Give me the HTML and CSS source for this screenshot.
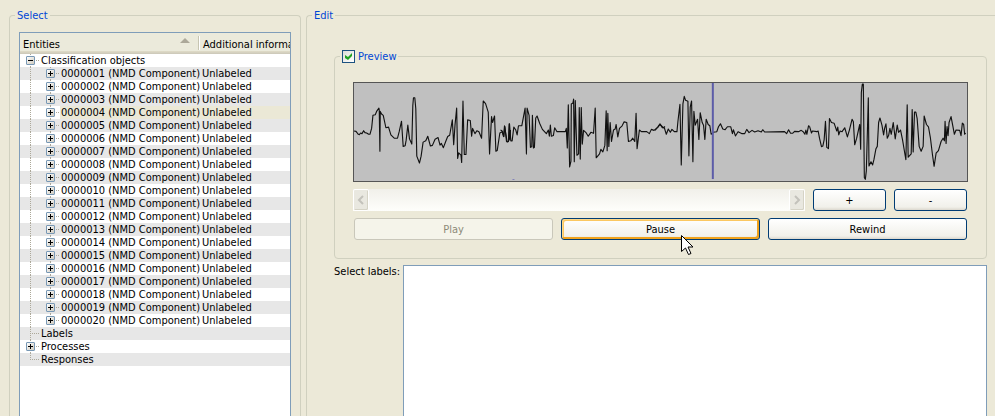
FILE: index.html
```html
<!DOCTYPE html>
<html lang="en">
<head>
<meta charset="utf-8">
<title>Entity editor</title>
<link rel="stylesheet" href="styles.css">
</head>
<body>
<main class="page">
<fieldset class="group group-select">
<legend>Select</legend>
<div class="tree-frame">
<table class="tree">
<colgroup><col class="col-entity"><col></colgroup>
<thead><tr><th scope="col"><span class="head">Entities<span class="sort"></span></span></th><th scope="col" class="second">Additional information</th></tr></thead>
<tbody>
<tr><td><div class="node"><i class="g first"><button class="box" aria-label="Collapse"></button></i><span>Classification objects</span></div></td><td></td></tr>
<tr><td><div class="node"><i class="g line"></i><i class="g"><button class="box plus" aria-label="Expand"></button></i><span>0000001 (NMD Component)</span></div></td><td>Unlabeled</td></tr>
<tr><td><div class="node"><i class="g line"></i><i class="g"><button class="box plus" aria-label="Expand"></button></i><span>0000002 (NMD Component)</span></div></td><td>Unlabeled</td></tr>
<tr><td><div class="node"><i class="g line"></i><i class="g"><button class="box plus" aria-label="Expand"></button></i><span>0000003 (NMD Component)</span></div></td><td>Unlabeled</td></tr>
<tr class="current"><td><div class="node"><i class="g line"></i><i class="g"><button class="box plus" aria-label="Expand"></button></i><span>0000004 (NMD Component)</span></div></td><td>Unlabeled</td></tr>
<tr><td><div class="node"><i class="g line"></i><i class="g"><button class="box plus" aria-label="Expand"></button></i><span>0000005 (NMD Component)</span></div></td><td>Unlabeled</td></tr>
<tr><td><div class="node"><i class="g line"></i><i class="g"><button class="box plus" aria-label="Expand"></button></i><span>0000006 (NMD Component)</span></div></td><td>Unlabeled</td></tr>
<tr><td><div class="node"><i class="g line"></i><i class="g"><button class="box plus" aria-label="Expand"></button></i><span>0000007 (NMD Component)</span></div></td><td>Unlabeled</td></tr>
<tr><td><div class="node"><i class="g line"></i><i class="g"><button class="box plus" aria-label="Expand"></button></i><span>0000008 (NMD Component)</span></div></td><td>Unlabeled</td></tr>
<tr><td><div class="node"><i class="g line"></i><i class="g"><button class="box plus" aria-label="Expand"></button></i><span>0000009 (NMD Component)</span></div></td><td>Unlabeled</td></tr>
<tr><td><div class="node"><i class="g line"></i><i class="g"><button class="box plus" aria-label="Expand"></button></i><span>0000010 (NMD Component)</span></div></td><td>Unlabeled</td></tr>
<tr><td><div class="node"><i class="g line"></i><i class="g"><button class="box plus" aria-label="Expand"></button></i><span>0000011 (NMD Component)</span></div></td><td>Unlabeled</td></tr>
<tr><td><div class="node"><i class="g line"></i><i class="g"><button class="box plus" aria-label="Expand"></button></i><span>0000012 (NMD Component)</span></div></td><td>Unlabeled</td></tr>
<tr><td><div class="node"><i class="g line"></i><i class="g"><button class="box plus" aria-label="Expand"></button></i><span>0000013 (NMD Component)</span></div></td><td>Unlabeled</td></tr>
<tr><td><div class="node"><i class="g line"></i><i class="g"><button class="box plus" aria-label="Expand"></button></i><span>0000014 (NMD Component)</span></div></td><td>Unlabeled</td></tr>
<tr><td><div class="node"><i class="g line"></i><i class="g"><button class="box plus" aria-label="Expand"></button></i><span>0000015 (NMD Component)</span></div></td><td>Unlabeled</td></tr>
<tr><td><div class="node"><i class="g line"></i><i class="g"><button class="box plus" aria-label="Expand"></button></i><span>0000016 (NMD Component)</span></div></td><td>Unlabeled</td></tr>
<tr><td><div class="node"><i class="g line"></i><i class="g"><button class="box plus" aria-label="Expand"></button></i><span>0000017 (NMD Component)</span></div></td><td>Unlabeled</td></tr>
<tr><td><div class="node"><i class="g line"></i><i class="g"><button class="box plus" aria-label="Expand"></button></i><span>0000018 (NMD Component)</span></div></td><td>Unlabeled</td></tr>
<tr><td><div class="node"><i class="g line"></i><i class="g"><button class="box plus" aria-label="Expand"></button></i><span>0000019 (NMD Component)</span></div></td><td>Unlabeled</td></tr>
<tr><td><div class="node"><i class="g line"></i><i class="g last"><button class="box plus" aria-label="Expand"></button></i><span>0000020 (NMD Component)</span></div></td><td>Unlabeled</td></tr>
<tr><td><div class="node"><i class="g"></i><span>Labels</span></div></td><td></td></tr>
<tr><td><div class="node"><i class="g"><button class="box plus" aria-label="Expand"></button></i><span>Processes</span></div></td><td></td></tr>
<tr><td><div class="node"><i class="g last"></i><span>Responses</span></div></td><td></td></tr>
</tbody>
</table>
</div>
</fieldset>
<fieldset class="group group-edit">
<legend>Edit</legend>
<fieldset class="preview">
<legend><label class="check"><input type="checkbox" checked>Preview</label></legend>
<svg class="wave" viewBox="0 0 1845 300" preserveAspectRatio="none" role="img" aria-label="Waveform">
<g fill="none" stroke="#111" stroke-width="3.4" stroke-linejoin="round">
<polyline transform="translate(-24 -21)" points="24,168 30,169 33,173 37,178 40,179 44,174 48,176 53,167 57,173 62,174 68,178 72,178 77,160 81,120 88,118 92,108 99,98 100,104 102,230 103,108 107,116 112,120 120,158 128,156 135,180 145,190 155,190 160,170 167,138 172,215 178,213 181,196 186,150 191,192 198,208 201,90 203,66 207,66 210,100 213,245 221,266 226,245 232,202 240,198 246,184 254,214 260,212 268,193 277,188 283,211 287,206 293,219 300,200 306,185 312,181 320,134 324,210 328,150 333,98 336,252 339,235 346,242 348,264 352,76 356,240 361,240 366,134 374,136 378,184 381,160 388,176 394,167 400,170 408,190 413,76 420,84 428,110 432,238 438,124 441,142 447,122 451,230 455,228 463,174 470,170 474,185 477,152 485,202 489,200 491,146 493,195 495,165"/>
<polyline transform="translate(441 -21)" points="0,165 5,168 10,185 13,154 18,200 24,200 27,146 31,198 35,198 40,156 46,165 50,180 54,152 64,152 74,98 78,238 80,98 86,120 90,218 94,216 96,120 99,220 102,218 106,128 110,122 118,145 126,163 138,176 144,165 147,184 150,150 153,184 159,182 163,158 170,170 195,170 198,160 201,220 204,88 208,278 212,260 213,85 218,82 220,70 222,262 225,75 230,242 235,238 237,96 240,254 243,96 246,208 250,166 258,174 264,184 272,172 280,175 285,98 288,250 298,238 302,224 308,232 314,212 318,106 321,228 323,114 326,215 330,142 334,200 340,165 345,162 348,148 353,186 358,160 366,152 372,140 380,142 385,200 392,198 398,190 404,200 408,114 411,222 418,165 424,170 440,170 448,176 454,163 462,166 474,156 480,148 490,158 495,154"/>
<polyline transform="translate(906 -21)" points="0,166 8,156 15,146 22,158 28,158 34,178 40,162 46,172 51,163 58,170 66,170 69,138 75,86 79,272 84,85 88,62 92,74 99,77 102,244 106,95 110,76 114,262 117,108 121,150 128,132 132,194 136,112 142,142 146,150 150,194 154,132 160,148 165,152 169,178 175,172 186,170 191,155 197,146 204,162 211,164 218,155 228,155 233,176 236,164 242,183 250,170 262,176 270,176 276,163 283,173 292,166 300,171 310,167 320,171 324,164 330,171 390,170 396,176 402,164 408,175 414,175 420,169 432,170 440,166 446,170 451,178 454,165 457,178 462,152 465,154"/>
<polyline transform="translate(1371 -21)" points="0,154 6,174 9,168 22,170 26,168 30,190 36,216 40,214 44,195 48,138 52,218 57,222 60,130 66,142 74,144 82,168 85,156 88,180 92,168 98,170 106,158 114,186 120,165 128,132 132,140 136,210 142,190 151,148 154,224 156,50 159,24 162,24 165,310 168,316 171,290 177,66 179,275 185,262 190,272 194,255 200,222 204,215 208,142 212,128 218,150 223,180 226,160 230,146 234,190 238,182 242,160 246,178 252,142 258,192 264,150 268,172 274,165 280,195 290,256 294,88 297,248 306,238 309,102 312,232 316,110 320,110 324,130 330,215 336,230 342,215 345,122 352,148 358,155 364,190 370,240 375,276 381,236 388,228 396,200 402,190 406,198 408,138 411,206 414,154 417,182 420,142 426,124 432,156 436,178 441,165 452,166 456,182 460,144 464,148 467,178 470,174"/>
</g>
<path d="M1077 0h6v294h-6z" fill="#5c5ca8"/>
<path d="M477 294h6v3h-6z" fill="#8080b8"/>
</svg>
<div class="row">
<div class="scroll">
<button class="arrow" disabled aria-label="Scroll left"><svg viewBox="0 0 8 10"><path d="M6 1L2 5l4 4"/></svg></button>
<button class="arrow" disabled aria-label="Scroll right"><svg viewBox="0 0 8 10"><path d="M2 1l4 4-4 4"/></svg></button>
</div>
<button class="btn small">+</button>
<button class="btn small">-</button>
</div>
<div class="row actions">
<button class="btn" disabled>Play</button>
<button class="btn hot">Pause<svg class="pointer" viewBox="0 0 12 21" aria-hidden="true"><path d="M.5.5v16l4-3.500 3 6.500 2.500-1-3-6.500h5z" fill="#fff" stroke="#000"/></svg></button>
<button class="btn">Rewind</button>
</div>
</fieldset>
<div class="labels">
<label for="labels">Select labels:</label>
<select id="labels" multiple></select>
</div>
</fieldset>
</main>
</body>
</html>
```
FILE: styles.css
```css
* { box-sizing: border-box; }

body {
  margin: 0;
  background: #ece9d8;
  color: #000;
  font: 11px/13px "DejaVu Sans Condensed", Tahoma, sans-serif;
}

button, input, select { font: inherit; color: inherit; }

.page {
  display: flex;
  gap: 5px;
  height: 100vh;
  padding: 9px 0 0 9px;
  overflow: hidden;
}

.group {
  display: flex;
  flex-direction: column;
  min-width: 0;
  margin: 0;
  border: 1px solid #d0d0bf;
  border-bottom: 0;
  border-radius: 4px 4px 0 0;
}

legend { padding: 0 2px; color: #0046d5; }

.group-select { flex: 0 0 292px; padding: 10px 9px 0; }
.group-select > legend { margin-left: -4px; }
.group-edit { flex: 1; padding: 28px 8px 0 27px; border-right: 0; border-top-right-radius: 0; }
.group-edit > legend { margin-left: -22px; }

/* Entity tree */
.tree-frame {
  flex: 1;
  min-height: 0;
  overflow: hidden;
  background: #fff;
  border: 1px solid #7f9db9;
  border-bottom: 0;
}
.tree { width: 100%; table-layout: fixed; border-collapse: collapse; }
.col-entity { width: 178px; }
.tree th {
  height: 21px;
  padding: 2px 0 0 3px;
  background: linear-gradient(#ebeadb 0 18px, #e0dcc8 18px, #cbc7b8);
  font-weight: normal;
  text-align: left;
  white-space: nowrap;
  overflow: hidden;
}
.tree th.second {
  padding-left: 5px;
  background:
    linear-gradient(#c7c5b2, #c7c5b2) 0 3px / 1px 14px no-repeat,
    linear-gradient(#fff, #fff) 1px 3px / 1px 14px no-repeat,
    linear-gradient(#ebeadb 0 18px, #e0dcc8 18px, #cbc7b8);
}
.head { display: flex; justify-content: space-between; padding-right: 8px; }
.sort {
  width: 10px;
  height: 5px;
  background: #aca899;
  clip-path: polygon(50% 0, 100% 100%, 0 100%);
}
.tree td { height: 13px; padding: 0; line-height: 13px; white-space: nowrap; }
.tree td + td { padding-left: 4px; }
.tree tbody tr:nth-child(even) { background: #e7e7e7; }
.tree .current td:first-child { background: #fff; }
.tree .current td + td, .tree .current .node > span { background: #ebe8d6; }
.node { display: flex; height: 13px; }
.node > span { flex: 1; padding-left: 1px; }

/* Connector lines */
.g {
  --dots: repeating-linear-gradient(#aca899 0 1px, transparent 1px 2px);
  display: flex;
  flex: 0 0 20px;
  align-items: center;
  padding-left: 6px;
  background:
    var(--dots) 10px 0 / 1px 100% no-repeat,
    repeating-linear-gradient(90deg, #aca899 0 1px, transparent 1px 2px) 10px 6px / 9px 1px no-repeat;
}
.g.line { background: var(--dots) 10px 0 / 1px 100% no-repeat; }
.g.last {
  background:
    var(--dots) 10px 0 / 1px 7px no-repeat,
    repeating-linear-gradient(90deg, #aca899 0 1px, transparent 1px 2px) 10px 6px / 9px 1px no-repeat;
}
.box {
  width: 9px;
  height: 9px;
  padding: 0;
  border: 1px solid #7898b5;
  border-radius: 1px;
  background:
    linear-gradient(#000, #000) 1px 3px / 5px 1px no-repeat,
    linear-gradient(135deg, #fff, #cfcabd);
}
.box.plus {
  background:
    linear-gradient(#000, #000) 1px 3px / 5px 1px no-repeat,
    linear-gradient(#000, #000) 3px 1px / 1px 5px no-repeat,
    linear-gradient(135deg, #fff, #cfcabd);
}

/* Preview */
.preview {
  display: flex;
  flex-direction: column;
  gap: 7px;
  min-width: 0;
  margin: 0;
  padding: 19px 18px 18px;
  border: 1px solid #d0d0bf;
  border-radius: 4px;
}
.preview > legend { margin-left: -13px; }
.check { display: flex; align-items: center; gap: 3px; }
.check input {
  appearance: none;
  width: 13px;
  height: 13px;
  margin: 0;
  border: 1px solid #1c5180;
  background: linear-gradient(135deg, #dcdcd7, #fff);
  position: relative;
}
.check input:checked::after {
  content: "";
  position: absolute;
  inset: 2px;
  background: #21a121;
  clip-path: polygon(0 28%, 43% 57%, 100% 0, 100% 43%, 43% 100%, 0 71%);
}
.wave {
  display: block;
  width: 100%;
  height: 100px;
  border: 1px solid #555;
  background: #c0c0c0;
}
.row { display: flex; gap: 8px; padding-right: 1px; }
.actions { padding-left: 1px; }
.scroll {
  display: flex;
  flex: 1;
  justify-content: space-between;
  height: 22px;
  background: linear-gradient(#f1f0ea, #fefefb);
}
.arrow {
  width: 16px;
  padding: 0;
  border: 1px solid #fff;
  border-radius: 2px;
  background: #e9e8e0;
  box-shadow: inset -1px -1px #d5d3c6;
}
.arrow svg { display: block; width: 8px; height: 10px; margin: 0 auto; fill: none; stroke: #c3c2bb; stroke-width: 2; }
.btn {
  position: relative;
  flex: 1;
  height: 22px;
  padding: 0;
  border: 1px solid #003c74;
  border-radius: 3px;
  background: linear-gradient(#fff, #f1f0ea 85%, #dcd8ce);
}
.btn.small { flex: 0 0 73px; }
.btn:disabled { border-color: #c9c7ba; background: #f5f4ea; color: #8d8a78; }
.btn.hot { box-shadow: inset 1px 1px #fdd889, inset -2px -2px #f0a21c, inset 2px 2px #fbc761; }
.pointer { position: absolute; left: 119px; top: 16px; width: 12px; height: 21px; overflow: visible; }

/* Labels */
.labels { display: flex; flex: 1; gap: 3px; min-height: 0; padding-top: 6px; }
.labels label { flex: none; white-space: nowrap; }
.labels select {
  appearance: none;
  flex: 1;
  min-width: 0;
  height: 100%;
  margin: 0;
  border: 1px solid #7f9db9;
  border-bottom: 0;
  border-radius: 0;
  background: #fff;
}
```
